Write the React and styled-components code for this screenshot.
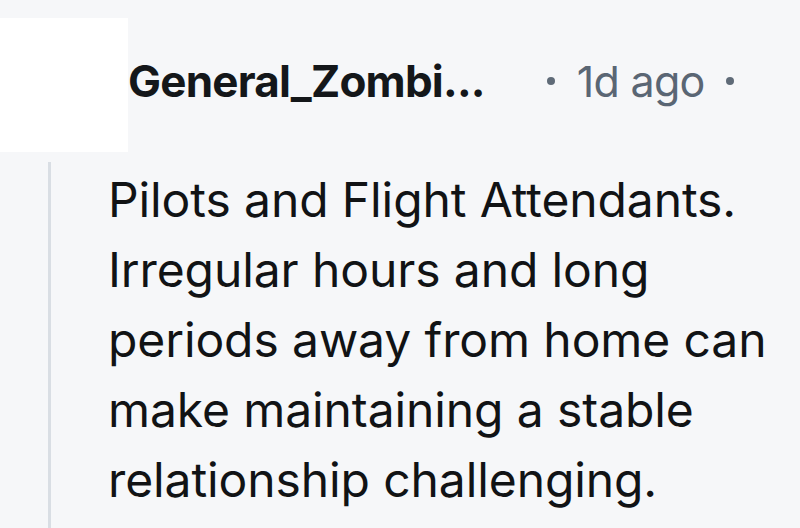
import React from "react";
import styled, { createGlobalStyle } from "styled-components";

const Global = createGlobalStyle`
  html, body { margin: 0; padding: 0; background: #f6f7f9; }
  body { width: 800px; height: 528px; overflow: hidden; font-family: Inter, "Noto Sans", sans-serif; }
`;

const Page = styled.div`
  width: 800px;
  height: 528px;
  background: #f6f7f9;
  padding-top: 18px;
  box-sizing: border-box;
  display: flex;
  flex-direction: column;
`;

const Header = styled.div`
  display: flex;
  align-items: center;
  height: 134px;
`;

const AvatarPatch = styled.div`
  width: 128px;
  height: 134px;
  background: #ffffff;
  flex-shrink: 0;
`;

const Line = styled.div`
  display: flex;
  align-items: center;
  padding-bottom: 8px;
`;

const Name = styled.span`
  font-size: 44px;
  font-weight: 700;
  color: #14171a;
  letter-spacing: -0.8px;
`;

const Meta = styled.span`
  display: flex;
  align-items: center;
  margin-left: 62px;
  font-size: 43px;
  color: #5a6674;
  letter-spacing: -0.7px;
`;

const Dot = styled.span`
  width: 8px;
  height: 8px;
  border-radius: 50%;
  background: #5f6b78;
  margin: ${(p) => (p.$first ? "0 22px 0 0" : "0 0 0 21px")};
`;

const Thread = styled.div`
  margin: 10px 0 0 48px;
  border-left: 3px solid #d9dee4;
  padding: 3px 0 0 57px;
  flex: 1;
`;

const Body = styled.p`
  margin: 0;
  font-size: 48px;
  line-height: 70px;
  color: #111315;
  letter-spacing: -0.1px;
  white-space: nowrap;
`;

export default function App() {
  return (
    <>
      <Global />
      <Page>
        <Header>
          <AvatarPatch />
          <Line>
            <Name>General_Zombi...</Name>
            <Meta>
              <Dot $first />
              1d ago
              <Dot />
            </Meta>
          </Line>
        </Header>
        <Thread>
          <Body>
            Pilots and Flight Attendants.
            <br />
            Irregular hours and long
            <br />
            periods away from home can
            <br />
            make maintaining a stable
            <br />
            relationship challenging.
          </Body>
        </Thread>
      </Page>
    </>
  );
}
